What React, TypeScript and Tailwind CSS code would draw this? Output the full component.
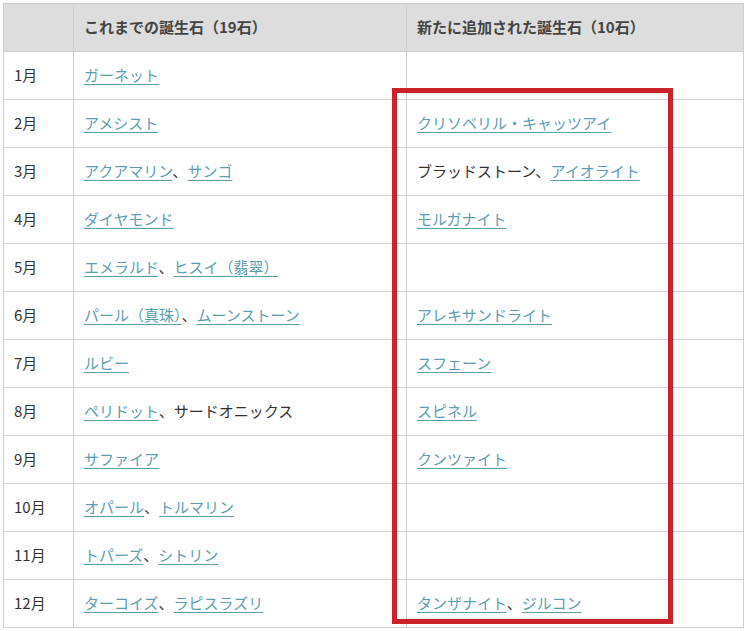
type Item = { t: string; link: boolean };

const L = (t: string): Item => ({ t, link: true });
const P = (t: string): Item => ({ t, link: false });

const rows: { m: string; old: Item[]; add: Item[] }[] = [
  { m: "1月", old: [L("ガーネット")], add: [] },
  { m: "2月", old: [L("アメシスト")], add: [L("クリソベリル・キャッツアイ")] },
  { m: "3月", old: [L("アクアマリン"), L("サンゴ")], add: [P("ブラッドストーン"), L("アイオライト")] },
  { m: "4月", old: [L("ダイヤモンド")], add: [L("モルガナイト")] },
  { m: "5月", old: [L("エメラルド"), L("ヒスイ（翡翠）")], add: [] },
  { m: "6月", old: [L("パール（真珠）"), L("ムーンストーン")], add: [L("アレキサンドライト")] },
  { m: "7月", old: [L("ルビー")], add: [L("スフェーン")] },
  { m: "8月", old: [L("ペリドット"), P("サードオニックス")], add: [L("スピネル")] },
  { m: "9月", old: [L("サファイア")], add: [L("クンツァイト")] },
  { m: "10月", old: [L("オパール"), L("トルマリン")], add: [] },
  { m: "11月", old: [L("トパーズ"), L("シトリン")], add: [] },
  { m: "12月", old: [L("ターコイズ"), L("ラピスラズリ")], add: [L("タンザナイト"), L("ジルコン")] },
];

function Cell({ items }: { items: Item[] }) {
  return (
    <>
      {items.map((it, i) => (
        <span key={i}>
          {i > 0 && "、"}
          {it.link ? (
            <a className="text-[#5e9db0] underline underline-offset-[3px] decoration-[#5e9db0]">{it.t}</a>
          ) : (
            it.t
          )}
        </span>
      ))}
    </>
  );
}

export default function App() {
  return (
    <div
      className="relative min-h-[631px] w-[745px] bg-white pl-[3px] pt-[3px] text-[15px] text-[#333]"
      style={{ fontFamily: '"Noto Sans CJK JP", "Noto Sans", sans-serif' }}
    >
      <table className="w-[740px] table-fixed border-collapse">
        <colgroup>
          <col className="w-[70px]" />
          <col className="w-[333px]" />
          <col className="w-[337px]" />
        </colgroup>
        <thead>
          <tr className="h-[48px] bg-[#dddddd] text-left font-bold text-[#444]">
            <th className="border border-[#d0d0d0] px-[10px]"></th>
            <th className="border border-[#d0d0d0] px-[10px] font-bold">これまでの誕生石（19石）</th>
            <th className="border border-[#d0d0d0] px-[10px] font-bold">新たに追加された誕生石（10石）</th>
          </tr>
        </thead>
        <tbody>
          {rows.map((r) => (
            <tr key={r.m} className="h-[48px]">
              <td className="border border-[#d0d0d0] px-[10px]">{r.m}</td>
              <td className="border border-[#d0d0d0] px-[10px]">
                <Cell items={r.old} />
              </td>
              <td className="border border-[#d0d0d0] px-[10px]">
                <Cell items={r.add} />
              </td>
            </tr>
          ))}
        </tbody>
      </table>
      {/* red highlight box over the new-stones column */}
      <div className="pointer-events-none absolute left-[392px] top-[88px] h-[536px] w-[281px] border-[5px] border-[#cc222c]" />
    </div>
  );
}
